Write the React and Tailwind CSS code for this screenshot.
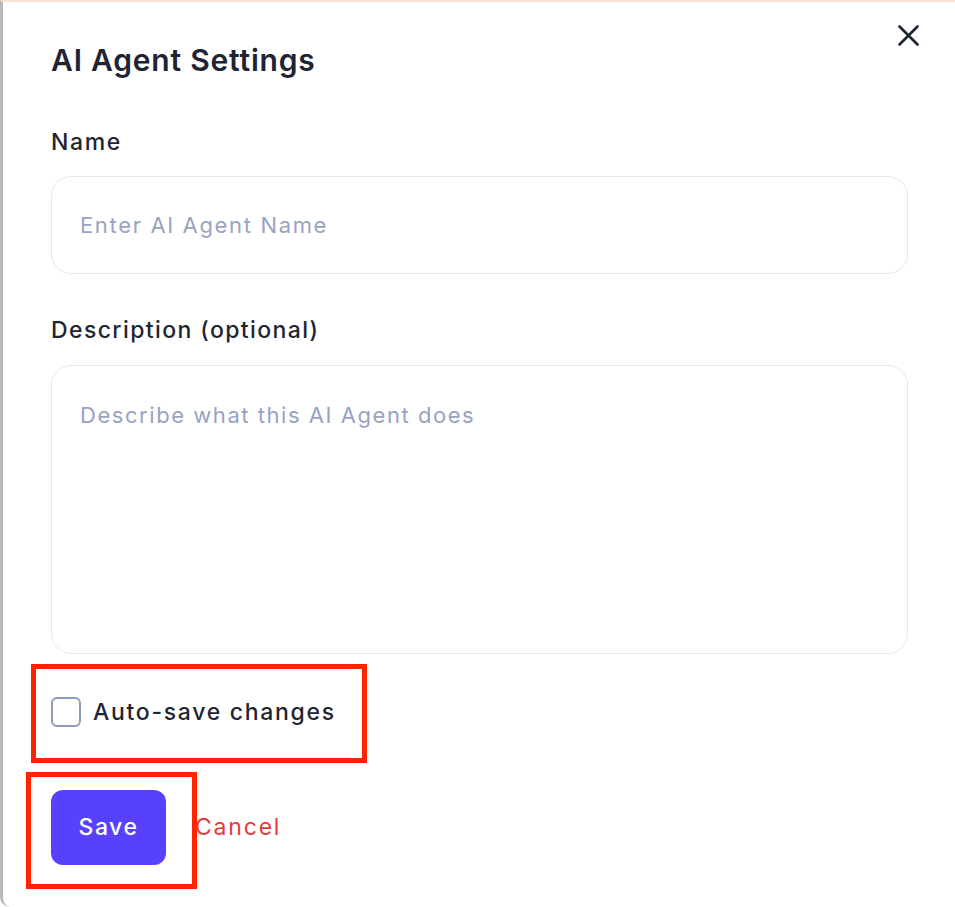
import React from "react";

function CloseIcon() {
  return (
    <svg width="27" height="27" viewBox="0 0 24 24" fill="none" stroke="#1f2633" strokeWidth="2.4" strokeLinecap="round">
      <path d="M4 4 L20 20" />
      <path d="M20 4 L4 20" />
    </svg>
  );
}

export default function App() {
  return (
    <div className="w-[955px] h-[907px] bg-white overflow-hidden" style={{ fontFamily: "Inter, 'Noto Sans', sans-serif" }}>
      <div className="relative h-full border-t-[2px] border-t-[#fbe2d7] border-l-[3px] border-l-[#b9b9b9] rounded-bl-[10px] bg-white">
        <button className="absolute top-[20px] right-[33px] w-[27px] h-[27px] flex items-center justify-center">
          <CloseIcon />
        </button>

        <div className="flex flex-col pl-[48px] pr-[47px] pt-[38px]">
          <h1 className="h-[40px] leading-[40px] text-[30px] font-semibold text-[#1e2434] tracking-[0.8px]">
            AI Agent Settings
          </h1>

          <label className="mt-[47px] h-[30px] leading-[30px] text-[23px] font-medium text-[#1f2533] tracking-[1.6px]">
            Name
          </label>
          <div className="mt-[19px] h-[98px] rounded-[20px] border border-[#e7e8eb] flex items-center px-[28px]">
            <span className="text-[22px] text-[#97a3c2] tracking-[1.65px]">Enter AI Agent Name</span>
          </div>

          <label className="mt-[41px] h-[30px] leading-[30px] text-[23px] font-medium text-[#1f2533] tracking-[1.4px]">
            Description (optional)
          </label>
          <div className="mt-[20px] h-[289px] rounded-[20px] border border-[#e7e8eb] px-[28px] pt-[34px]">
            <span className="block leading-[30px] text-[22px] text-[#97a3c2] tracking-[1.55px]">
              Describe what this AI Agent does
            </span>
          </div>

          <div className="relative mt-[43px] h-[30px] flex items-center gap-[12px]">
            <div className="w-[30px] h-[30px] rounded-[6px] border-[2px] border-[#8f9aba] bg-white" />
            <span className="text-[23px] font-medium text-[#1f2533] tracking-[1.7px]">Auto-save changes</span>
            <div className="absolute left-[-20px] top-[-33px] w-[336px] h-[99px] border-[5px] border-[#ff2400] pointer-events-none" />
          </div>

          <div className="relative mt-[63px] flex items-center gap-[29px]">
            <button className="w-[115px] h-[75px] rounded-[12px] bg-[#5741ff] text-white text-[23px] font-medium tracking-[1.5px]">
              Save
            </button>
            <span className="text-[23px] text-[#e8393b] tracking-[1.8px]">Cancel</span>
            <div className="absolute left-[-25px] top-[-18px] w-[171px] h-[117px] border-[5px] border-[#ff2400] pointer-events-none" />
          </div>
        </div>
      </div>
    </div>
  );
}
